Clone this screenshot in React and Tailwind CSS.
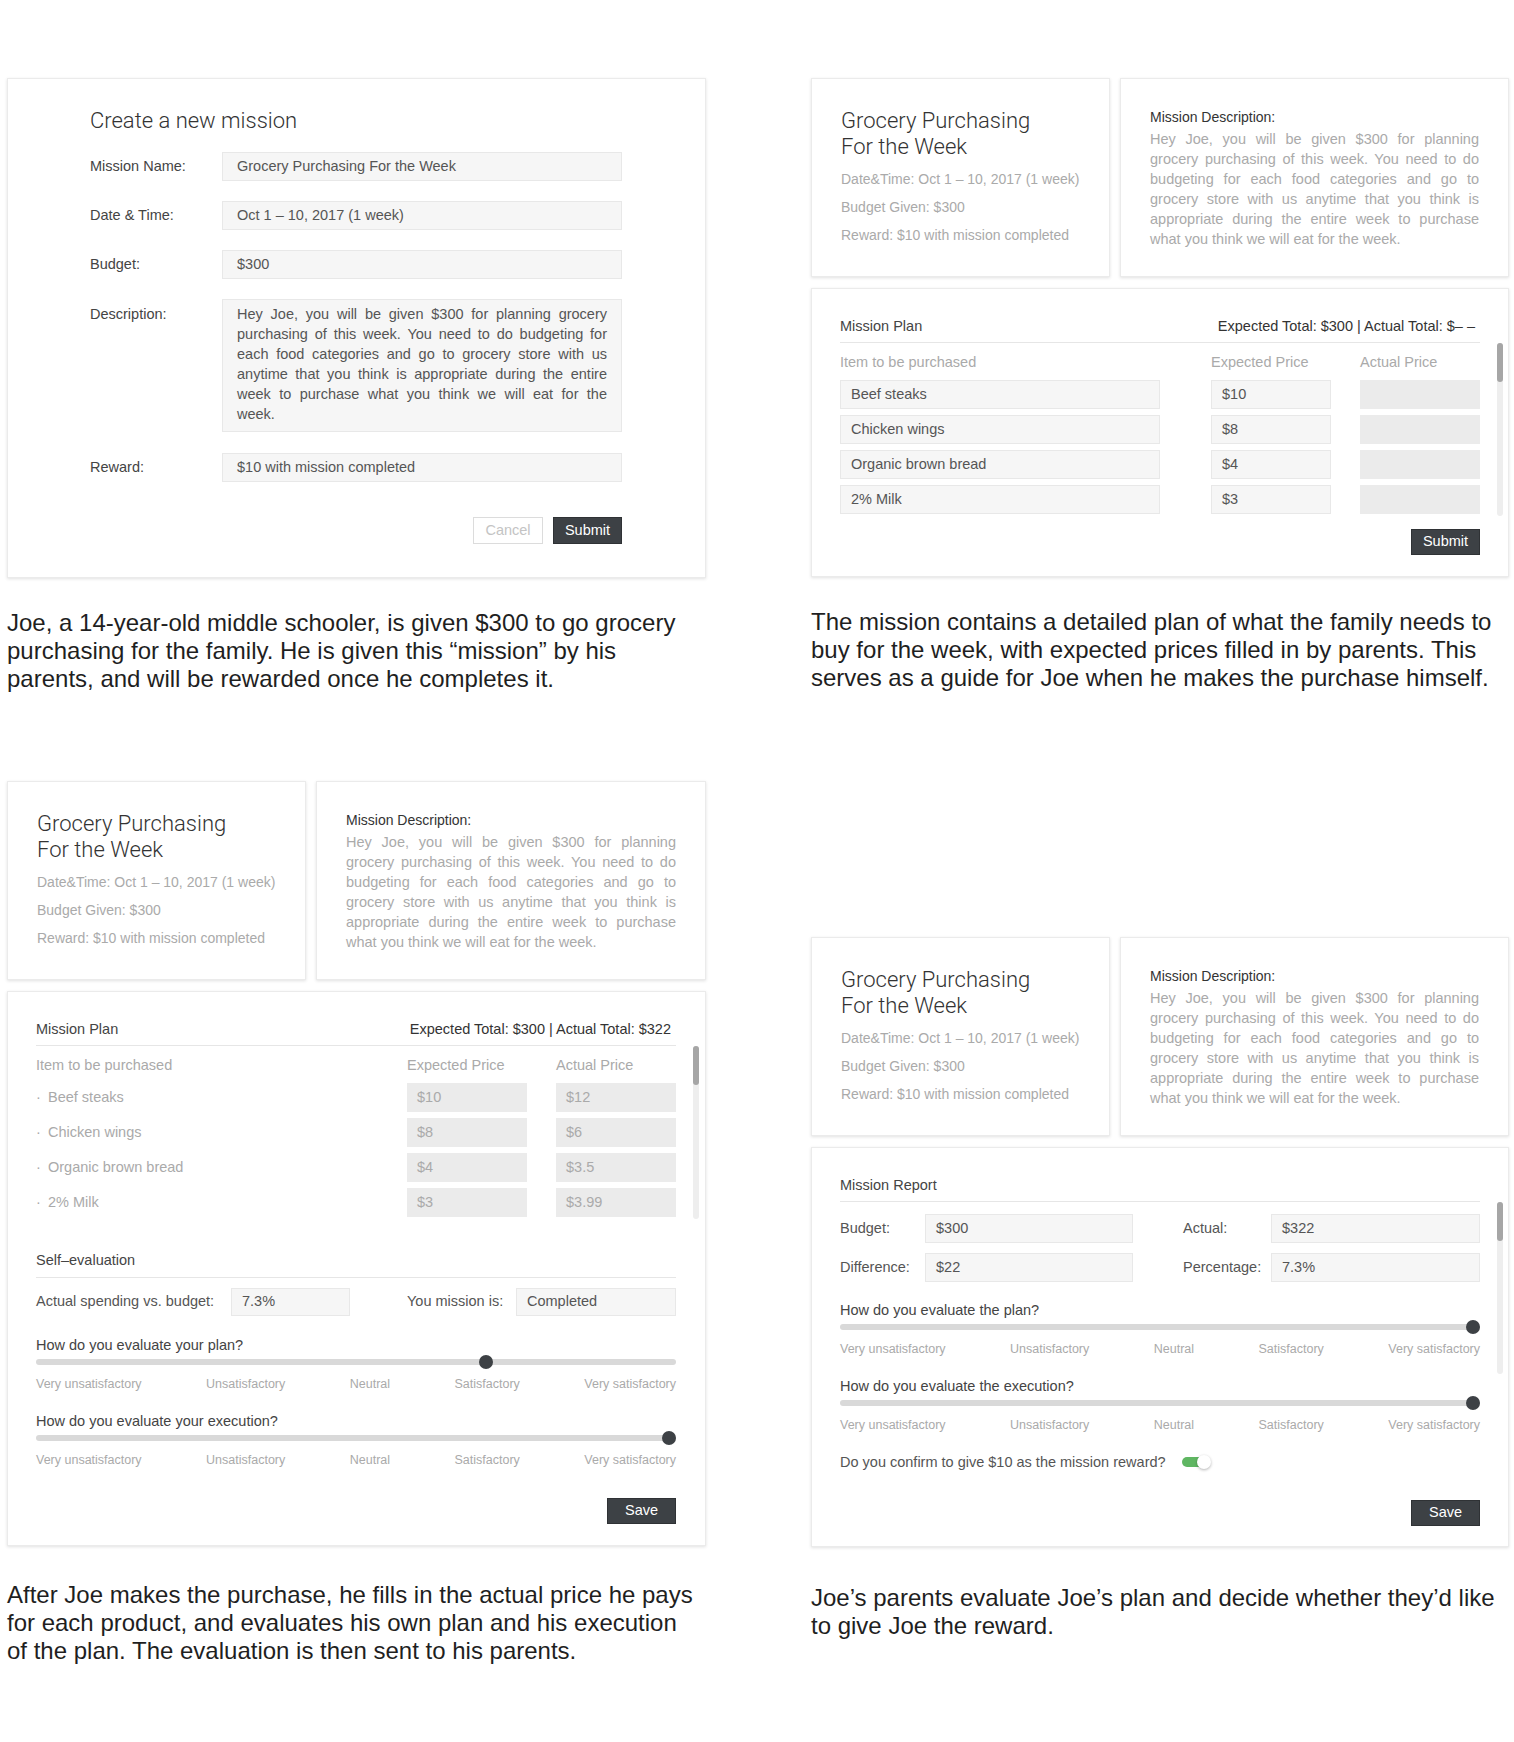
const card = 'bg-white border border-[#ebebeb] shadow-[0_1px_3px_rgba(0,0,0,0.12)]';

const descLines = [
  'Hey Joe, you will be given $300 for planning',
  'grocery purchasing of this week. You need to do',
  'budgeting for each food categories and go to',
  'grocery store with us anytime that you think is',
  'appropriate during the entire week to purchase',
  'what you think we will eat for the week.',
];

const formDescLines = [
  'Hey Joe, you will be given $300 for planning grocery',
  'purchasing of this week. You need to do budgeting for',
  'each food categories and go to grocery store with us',
  'anytime that you think is appropriate during the entire',
  'week to purchase what you think we will eat for the',
  'week.',
];

const items = [
  { name: 'Beef steaks', expected: '$10', actual: '$12' },
  { name: 'Chicken wings', expected: '$8', actual: '$6' },
  { name: 'Organic brown bread', expected: '$4', actual: '$3.5' },
  { name: '2% Milk', expected: '$3', actual: '$3.99' },
];

const scale = ['Very unsatisfactory', 'Unsatisfactory', 'Neutral', 'Satisfactory', 'Very satisfactory'];

function Justified({ lines, className = '' }) {
  return (
    <div className={className}>
      {lines.map((line, i) => (
        <span
          key={i}
          className={`block whitespace-nowrap ${i < lines.length - 1 ? 'text-justify [text-align-last:justify]' : ''}`}
        >
          {line}
        </span>
      ))}
    </div>
  );
}

function Box({ children, className = '', muted = false }) {
  return (
    <div
      className={`h-[29px] flex items-center px-[10px] text-[14.5px] ${
        muted ? 'bg-[#ebebeb] text-[#aaaaaa]' : 'bg-[#f6f6f6] border border-[#e8e8e8] text-[#555555]'
      } ${className}`}
    >
      {children}
    </div>
  );
}

function DarkButton({ children }) {
  return (
    <button className="h-[26px] w-[69px] bg-[#3d4145] text-white text-[14.5px] border border-[#2f3235]">
      {children}
    </button>
  );
}

function Scrollbar({ className = '' }) {
  return (
    <div className={`ml-[17px] w-[6px] rounded-full bg-[#eeeeee] flex flex-col ${className}`}>
      <div className="h-[39px] w-[6px] rounded-full bg-[#a6a6a6]" />
    </div>
  );
}

function Slider({ question, thumb }) {
  return (
    <div>
      <p className="text-[14.5px] leading-[20px] text-[#444]">{question}</p>
      <div className="relative h-[14px] flex items-center">
        <div className="w-full h-[6px] rounded-full bg-[#d9d9d9]" />
        <div className={`absolute top-0 w-[14px] h-[14px] rounded-full bg-[#3d4145] ${thumb}`} />
      </div>
      <div className="mt-[7px] flex justify-between text-[12.5px] leading-[16px] text-[#aaaaaa]">
        {scale.map((s) => (
          <span key={s}>{s}</span>
        ))}
      </div>
    </div>
  );
}

function Summary() {
  return (
    <div className="flex gap-[10px]">
      <div className={`${card} w-[299px] h-[199px] pl-[29px] pt-[29px]`}>
        <h2 className="font-['Roboto',sans-serif] font-light text-[22px] leading-[26px] text-[#333]">
          Grocery Purchasing
          <br />
          For the Week
        </h2>
        <div className="mt-[5px] text-[14px] leading-[28px] text-[#aaaaaa]">
          <p>Date&amp;Time: Oct 1 – 10, 2017 (1 week)</p>
          <p>Budget Given: $300</p>
          <p>Reward: $10 with mission completed</p>
        </div>
      </div>
      <div className={`${card} flex-1 h-[199px] px-[29px] pt-[28px]`}>
        <p className="text-[14px] leading-[20px] text-[#333] mb-[2px]">Mission Description:</p>
        <Justified lines={descLines} className="text-[14.5px] leading-[20px] text-[#aaaaaa]" />
      </div>
    </div>
  );
}

function PlanHeader({ title, right }) {
  return (
    <div className="w-[640px] flex justify-between pb-[6px] border-b border-[#e6e6e6] text-[14.5px] leading-[20px]">
      <span className="text-[#444]">{title}</span>
      {right && <span className="pr-[5px] text-[#333]">{right}</span>}
    </div>
  );
}

function PlanCard({ done }) {
  return (
    <div className={`${card} pl-[28px] pt-[27px] ${done ? 'pb-[21px]' : 'pb-[21px]'}`}>
      <PlanHeader
        title="Mission Plan"
        right={done ? 'Expected Total: $300 | Actual Total: $322' : 'Expected Total: $300 | Actual Total: $– –'}
      />
      <div className="flex">
        <div className="w-[640px] pb-[2px]">
          <div className="mt-[9px] flex text-[14.5px] leading-[20px] text-[#aaaaaa]">
            <span className="w-[371px]">Item to be purchased</span>
            <span className="w-[149px]">Expected Price</span>
            <span>Actual Price</span>
          </div>
          <div className="mt-[8px] flex flex-col gap-[6px]">
            {items.map((it) => (
              <div key={it.name} className="flex">
                {done ? (
                  <div className="w-[320px] h-[29px] flex items-center text-[14.5px] text-[#aaaaaa]">
                    <span className="w-[12px]">·</span>
                    {it.name}
                  </div>
                ) : (
                  <Box className="w-[320px]">{it.name}</Box>
                )}
                <Box className="w-[120px] ml-[51px]" muted={done}>
                  {it.expected}
                </Box>
                <Box className="w-[120px] ml-[29px]" muted>
                  {done ? it.actual : ''}
                </Box>
              </div>
            ))}
          </div>
        </div>
        <Scrollbar />
      </div>
      {done ? (
        <>
          <div className="mt-[31px]">
            <div className="w-[640px] pb-[7px] border-b border-[#e6e6e6] text-[14.5px] leading-[20px] text-[#444]">
              Self–evaluation
            </div>
          </div>
          <div className="w-[640px] mt-[10px] flex items-center text-[14.5px] text-[#555]">
            <span className="w-[195px]">Actual spending vs. budget:</span>
            <Box className="w-[119px] !h-[28px]">7.3%</Box>
            <span className="ml-[57px] w-[109px]">You mission is:</span>
            <Box className="w-[160px] !h-[28px]">Completed</Box>
          </div>
          <div className="w-[640px] mt-[19px]">
            <Slider question="How do you evaluate your plan?" thumb="left-[443px]" />
          </div>
          <div className="w-[640px] mt-[19px]">
            <Slider question="How do you evaluate your execution?" thumb="right-0" />
          </div>
          <div className="w-[640px] mt-[30px] flex justify-end">
            <DarkButton>Save</DarkButton>
          </div>
        </>
      ) : (
        <div className="w-[640px] mt-[13px] flex justify-end">
          <DarkButton>Submit</DarkButton>
        </div>
      )}
    </div>
  );
}

function ReportCard() {
  return (
    <div className={`${card} pl-[28px] pt-[27px] pb-[20px]`}>
      <PlanHeader title="Mission Report" />
      <div className="flex">
        <div className="w-[640px]">
          <div className="mt-[12px] flex flex-col gap-[10px] text-[14.5px] text-[#555]">
            <div className="flex items-center">
              <span className="w-[85px]">Budget:</span>
              <Box className="w-[208px]">$300</Box>
              <span className="ml-[50px] w-[88px]">Actual:</span>
              <Box className="w-[209px]">$322</Box>
            </div>
            <div className="flex items-center">
              <span className="w-[85px]">Difference:</span>
              <Box className="w-[208px]">$22</Box>
              <span className="ml-[50px] w-[88px]">Percentage:</span>
              <Box className="w-[209px]">7.3%</Box>
            </div>
          </div>
          <div className="mt-[18px]">
            <Slider question="How do you evaluate the plan?" thumb="right-0" />
          </div>
          <div className="mt-[19px]">
            <Slider question="How do you evaluate the execution?" thumb="right-0" />
          </div>
          <div className="mt-[19px] flex items-center text-[14.5px] leading-[20px] text-[#555]">
            <span>Do you confirm to give $10 as the mission reward?</span>
            <div className="relative ml-[16px] w-[29px] h-[14px] flex items-center">
              <div className="w-[26px] h-[10px] rounded-full bg-[#5fb662]" />
              <div className="absolute right-0 top-0 w-[14px] h-[14px] rounded-full bg-white shadow-[0_1px_3px_rgba(0,0,0,0.3)]" />
            </div>
          </div>
          <div className="mt-[28px] flex justify-end">
            <DarkButton>Save</DarkButton>
          </div>
        </div>
        <Scrollbar className="h-[172px]" />
      </div>
    </div>
  );
}

function CreateCard() {
  const rows = [
    ['Mission Name:', 'Grocery Purchasing For the Week'],
    ['Date & Time:', 'Oct 1 – 10, 2017 (1 week)'],
    ['Budget:', '$300'],
  ];
  return (
    <div className={`${card} h-[500px] pl-[82px] pt-[29px]`}>
      <h1 className="font-['Roboto',sans-serif] font-light text-[22px] leading-[26px] text-[#333]">
        Create a new mission
      </h1>
      <div className="mt-[18px] flex flex-col gap-[20px] text-[14.5px] text-[#444]">
        {rows.map(([label, value]) => (
          <div key={label} className="flex items-center">
            <span className="w-[132px]">{label}</span>
            <Box className="w-[400px] !px-[14px]">{value}</Box>
          </div>
        ))}
        <div className="flex items-start">
          <span className="w-[132px] pt-[5px] leading-[20px]">Description:</span>
          <div className="w-[400px] h-[133px] bg-[#f6f6f6] border border-[#e8e8e8] px-[14px] pt-[4px]">
            <Justified lines={formDescLines} className="text-[14.5px] leading-[20px] text-[#555]" />
          </div>
        </div>
        <div className="flex items-center mt-[1px]">
          <span className="w-[132px]">Reward:</span>
          <Box className="w-[400px] !px-[14px]">$10 with mission completed</Box>
        </div>
      </div>
      <div className="w-[532px] mt-[35px] flex justify-end gap-[10px]">
        <button className="h-[27px] w-[70px] bg-white border border-[#dcdcdc] text-[#c4c4c4] text-[14.5px]">
          Cancel
        </button>
        <button className="h-[27px] w-[69px] bg-[#3d4145] text-white text-[14.5px] border border-[#2f3235]">
          Submit
        </button>
      </div>
    </div>
  );
}

function Caption({ lines, className = '' }) {
  return (
    <p className={`text-[24px] leading-[28px] text-[#1f1f1f] ${className}`}>
      {lines.map((l) => (
        <span key={l} className="block whitespace-nowrap">
          {l}
        </span>
      ))}
    </p>
  );
}

export default function App() {
  return (
    <div className="min-h-[1742px] bg-white pt-[78px] pl-[7px] font-['Liberation_Sans',Arial,sans-serif] text-[#333]">
      <div className="flex items-start gap-[105px]">
        <div className="w-[699px]">
          <CreateCard />
          <Caption
            className="mt-[31px]"
            lines={[
              'Joe, a 14-year-old middle schooler, is given $300 to go grocery',
              'purchasing for the family. He is given this “mission” by his',
              'parents, and will be rewarded once he completes it.',
            ]}
          />
        </div>
        <div className="w-[698px]">
          <Summary />
          <div className="mt-[11px]">
            <PlanCard />
          </div>
          <Caption
            className="mt-[31px]"
            lines={[
              'The mission contains a detailed plan of what the family needs to',
              'buy for the week, with expected prices filled in by parents. This',
              'serves as a guide for Joe when he makes the purchase himself.',
            ]}
          />
        </div>
      </div>

      <div className="mt-[88px] flex items-start gap-[105px]">
        <div className="w-[699px]">
          <Summary />
          <div className="mt-[11px]">
            <PlanCard done />
          </div>
          <Caption
            className="mt-[35px]"
            lines={[
              'After Joe makes the purchase, he fills in the actual price he pays',
              'for each product, and evaluates his own plan and his execution',
              'of the plan. The evaluation is then sent to his parents.',
            ]}
          />
        </div>
        <div className="w-[698px] mt-[156px]">
          <Summary />
          <div className="mt-[11px]">
            <ReportCard />
          </div>
          <Caption
            className="mt-[37px]"
            lines={[
              'Joe’s parents evaluate Joe’s plan and decide whether they’d like',
              'to give Joe the reward.',
            ]}
          />
        </div>
      </div>
    </div>
  );
}
